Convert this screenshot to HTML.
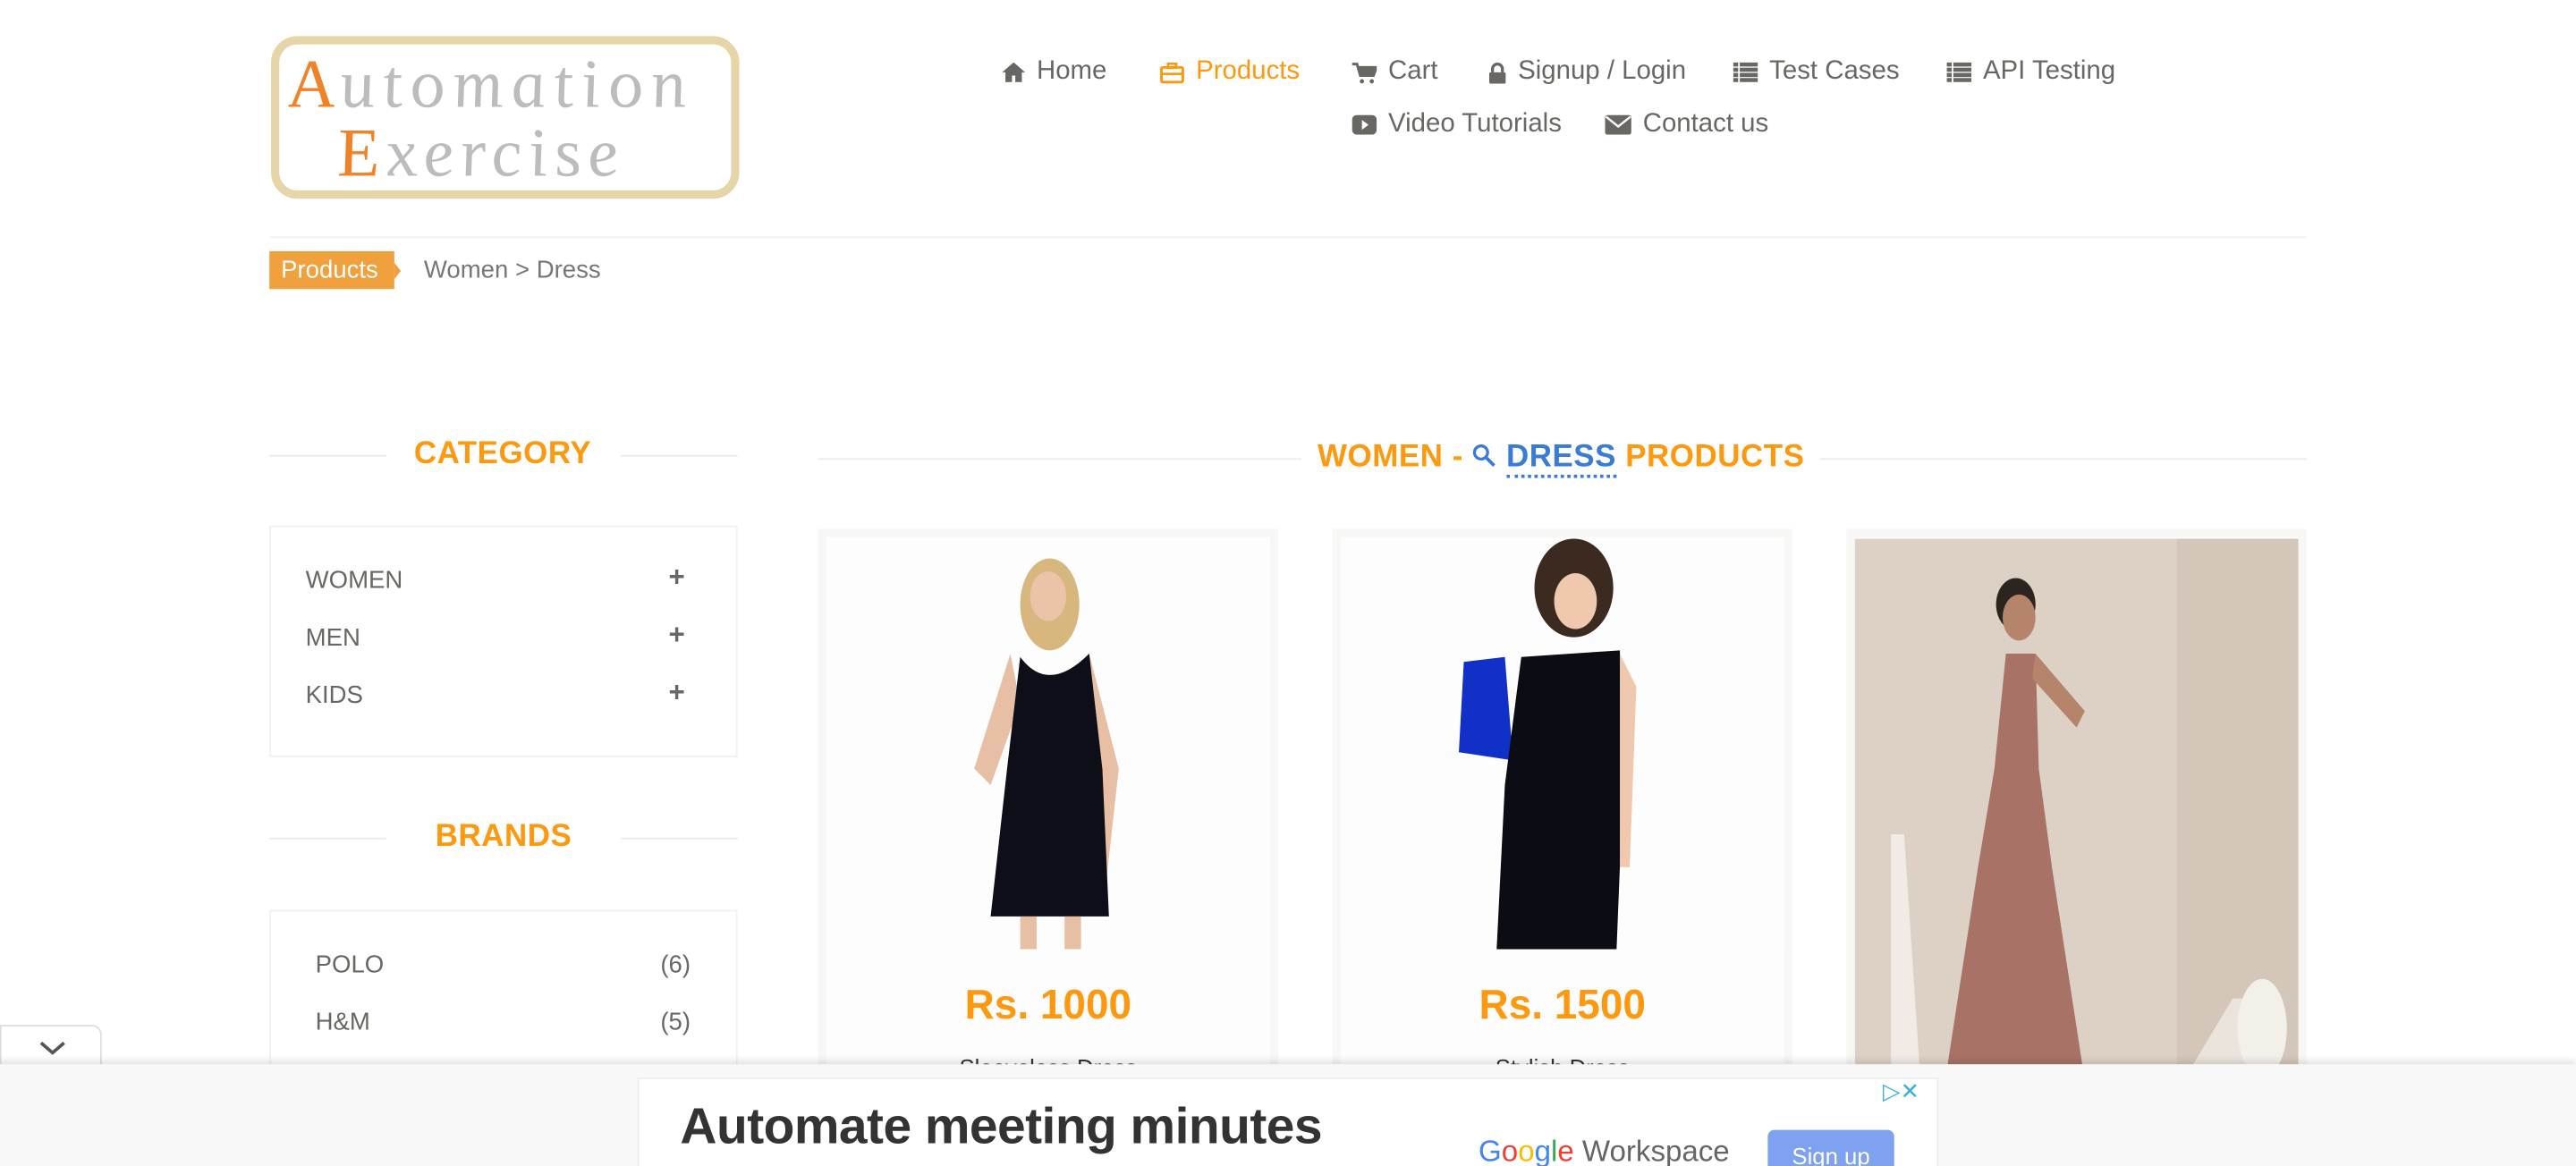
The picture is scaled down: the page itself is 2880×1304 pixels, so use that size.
<!DOCTYPE html>
<html><head><meta charset="utf-8"><style>
*{margin:0;padding:0;box-sizing:border-box}
html,body{width:2880px;height:1304px;overflow:hidden;background:#fff}
#w{position:absolute;left:0;top:0;width:1568px;height:710px;transform:scale(1.836735);transform-origin:0 0;font-family:"Liberation Sans",sans-serif;color:#696763;overflow:hidden}
.a{position:absolute;white-space:nowrap}
.nav{font-size:16px;color:#696763;display:flex;align-items:center;gap:7px}
.nav svg{flex:none}
.or{color:#FE980F}
.h2{font-size:19px;font-weight:bold;color:#FE980F;letter-spacing:.3px}
.line{position:absolute;height:1px;background:#eaeaea}
.box{position:absolute;border:1px solid #f1f1f1}
.card{position:absolute;top:322px;width:280px;height:340px;background:#f7f7f5;}
.card .in{position:absolute;left:5px;top:5px;right:5px;bottom:0;background:#fdfdfd}
.price{font-size:25px;font-weight:bold;color:#FE980F;width:100%;text-align:center;left:0}
.nm{font-size:14px;color:#333;width:100%;text-align:center;left:0}
</style></head><body><div id="w">
<div class="a" style="left:165px;top:22px;width:285px;height:99px;border:5px solid #e6d5a9;border-radius:16px;background:#fff"></div>
<div class="a" style="left:176px;top:28px;font-family:'Liberation Serif',serif;font-style:italic;font-size:42px;color:#bcbcbc;letter-spacing:5px;transform:skewX(8deg)"><span style="color:#f0832a">A</span>utomation</div>
<div class="a" style="left:205px;top:70px;font-family:'Liberation Serif',serif;font-style:italic;font-size:42px;color:#bcbcbc;letter-spacing:4px;transform:skewX(8deg)"><span style="color:#f0832a">E</span>xercise</div>
<div class="a nav" style="left:610px;top:35px"><svg width="14" height="12" viewBox="0 0 14 12"><path d="M7 0L0 6h2v6h4V8h2v4h4V6h2z" fill="#696763"/></svg>Home</div>
<div class="a nav or" style="left:706px;top:35px"><svg width="15" height="13" viewBox="0 0 15 13"><rect x="1" y="3" width="13" height="9" rx="1" fill="none" stroke="#FE980F" stroke-width="1.6"/><rect x="5" y="0.8" width="5" height="2.5" fill="none" stroke="#FE980F" stroke-width="1.4"/><line x1="1" y1="7" x2="14" y2="7" stroke="#FE980F" stroke-width="1.4"/></svg>Products</div>
<div class="a nav" style="left:823px;top:35px"><svg width="15" height="13" viewBox="0 0 15 13"><path d="M0 1h3l2 7h8l2-5H4" fill="none" stroke="#696763" stroke-width="1.6"/><path d="M4 3h11l-2 5H5z" fill="#696763"/><circle cx="6" cy="11.5" r="1.3" fill="#696763"/><circle cx="12" cy="11.5" r="1.3" fill="#696763"/></svg>Cart</div>
<div class="a nav" style="left:906px;top:35px"><svg width="11" height="13" viewBox="0 0 11 13"><path d="M2.5 6V4a3 3 0 016 0v2" fill="none" stroke="#696763" stroke-width="1.8"/><rect x="0.5" y="6" width="10" height="7" rx="1" fill="#696763"/></svg>Signup / Login</div>
<div class="a nav" style="left:1055px;top:35px"><svg width="15" height="12" viewBox="0 0 15 12"><g fill="#696763"><rect y="0" width="3" height="2.5"/><rect y="3.2" width="3" height="2.5"/><rect y="6.4" width="3" height="2.5"/><rect y="9.5" width="3" height="2.5"/><rect x="4" y="0" width="11" height="2.5"/><rect x="4" y="3.2" width="11" height="2.5"/><rect x="4" y="6.4" width="11" height="2.5"/><rect x="4" y="9.5" width="11" height="2.5"/></g></svg>Test Cases</div>
<div class="a nav" style="left:1185px;top:35px"><svg width="15" height="12" viewBox="0 0 15 12"><g fill="#696763"><rect y="0" width="3" height="2.5"/><rect y="3.2" width="3" height="2.5"/><rect y="6.4" width="3" height="2.5"/><rect y="9.5" width="3" height="2.5"/><rect x="4" y="0" width="11" height="2.5"/><rect x="4" y="3.2" width="11" height="2.5"/><rect x="4" y="6.4" width="11" height="2.5"/><rect x="4" y="9.5" width="11" height="2.5"/></g></svg>API Testing</div>
<div class="a nav" style="left:823px;top:67px"><svg width="15" height="12" viewBox="0 0 15 12"><rect width="15" height="12" rx="3" fill="#696763"/><path d="M6 3l4 3-4 3z" fill="#fff"/></svg>Video Tutorials</div>
<div class="a nav" style="left:977px;top:67px"><svg width="16" height="12" viewBox="0 0 16 12"><rect width="16" height="12" rx="1.5" fill="#696763"/><path d="M0.5 1l7.5 6 7.5-6" fill="none" stroke="#fff" stroke-width="1.3"/></svg>Contact us</div>
<div class="line" style="left:164px;top:144px;width:1240px;background:#f2f2f2"></div>
<div class="a" style="left:164px;top:153px;width:76px;height:23px;background:#f0a03c;color:#fff;font-size:15px;padding:3px 0 0 7px">Products</div>
<div class="a" style="left:240px;top:160px;width:0;height:0;border-top:5px solid transparent;border-bottom:5px solid transparent;border-left:4px solid #f0a03c"></div>
<div class="a" style="left:258px;top:156px;font-size:15px;color:#777">Women &gt; Dress</div>
<div class="line" style="left:164px;top:277px;width:71px"></div>
<div class="line" style="left:378px;top:277px;width:71px"></div>
<div class="a h2" style="left:252px;top:266px">CATEGORY</div>
<div class="box" style="left:164px;top:320px;width:285px;height:141px"></div>
<div class="a" style="left:186px;top:345px;font-size:15px">WOMEN</div>
<div class="a" style="left:186px;top:380px;font-size:15px">MEN</div>
<div class="a" style="left:186px;top:415px;font-size:15px">KIDS</div>
<div class="a" style="left:407px;top:342px;font-size:17px;font-weight:bold">+</div>
<div class="a" style="left:407px;top:377px;font-size:17px;font-weight:bold">+</div>
<div class="a" style="left:407px;top:412px;font-size:17px;font-weight:bold">+</div>
<div class="line" style="left:164px;top:510px;width:71px"></div>
<div class="line" style="left:378px;top:510px;width:71px"></div>
<div class="a h2" style="left:265px;top:499px">BRANDS</div>
<div class="box" style="left:164px;top:554px;width:285px;height:160px"></div>
<div class="a" style="left:192px;top:579px;font-size:15px">POLO</div>
<div class="a" style="left:192px;top:614px;font-size:15px">H&amp;M</div>
<div class="a" style="left:402px;top:579px;font-size:15px">(6)</div>
<div class="a" style="left:402px;top:614px;font-size:15px">(5)</div>
<div class="line" style="left:498px;top:279px;width:906px"></div>
<div class="a h2" style="left:792px;top:268px;background:#fff;padding:0 10px">WOMEN - <svg width="15" height="15" viewBox="0 0 15 15" style="vertical-align:-1px"><circle cx="5.5" cy="5.5" r="4" fill="none" stroke="#3a7bd5" stroke-width="1.8"/><path d="M8.5 8.5l5 5" stroke="#3a7bd5" stroke-width="2"/></svg> <span style="color:#3a7bd5;border-bottom:2px dotted #3a7bd5">DRESS</span> PRODUCTS</div>
<div class="card" style="left:498px"><div class="in"></div>
<svg class="a" style="left:5px;top:6px" width="270" height="250"><rect width="270" height="250" fill="#fdfdfd"/>
<ellipse cx="136" cy="40" rx="18" ry="28" fill="#d8b77f"/><ellipse cx="135" cy="35" rx="11" ry="15" fill="#eac3a8"/>
<path d="M112 70 L90 140 L100 150 L118 100Z M160 70 L178 140 L168 230 L160 230 L168 140Z" fill="#e7bfa5"/>
<path d="M118 72 Q135 95 160 70 L168 140 L172 230 L100 230 L110 140Z" fill="#0d0e18"/>
<rect x="118" y="230" width="10" height="20" fill="#e7bfa5"/><rect x="145" y="230" width="10" height="20" fill="#e7bfa5"/></svg>
<div class="a price" style="top:276px">Rs. 1000</div><div class="a nm" style="top:320px">Sleeveless Dress</div></div>
<div class="card" style="left:811px"><div class="in"></div>
<svg class="a" style="left:5px;top:6px" width="270" height="250"><rect width="270" height="250" fill="#fdfdfd"/>
<ellipse cx="142" cy="30" rx="24" ry="30" fill="#3a2a20"/><ellipse cx="143" cy="38" rx="13" ry="17" fill="#f0c8ae"/>
<path d="M75 75 L100 72 L105 135 L72 130Z" fill="#1030c8"/>
<path d="M110 72 Q140 70 170 68 L172 150 L168 250 L95 250 L100 150Z" fill="#0b0c14"/>
<path d="M170 70 L180 90 L176 200 L170 200Z" fill="#f0c8ae"/></svg>
<div class="a price" style="top:276px">Rs. 1500</div><div class="a nm" style="top:320px">Stylish Dress</div></div>
<div class="card" style="left:1124px"><div class="in"></div>
<svg class="a" style="left:5px;top:6px" width="270" height="330"><rect width="270" height="330" fill="#ddd1c6"/><rect x="196" width="74" height="330" fill="#d4c7ba"/>
<path d="M22 180 L30 180 L40 330 L22 330Z" fill="#f0ebe4"/><path d="M230 280 L250 280 L240 330 L200 330Z" fill="#ebe4dc"/>
<ellipse cx="248" cy="298" rx="15" ry="30" fill="#f3efe9"/>
<ellipse cx="98" cy="40" rx="12" ry="16" fill="#2c241f"/><ellipse cx="100" cy="48" rx="10" ry="14" fill="#b5846a"/>
<path d="M92 70 L110 70 L112 140 L120 200 L140 330 L55 330 L75 200 L85 140Z" fill="#a87266"/>
<path d="M110 70 L140 105 L135 115 L108 85Z" fill="#b5846a"/></svg>
</div>
<div class="a" style="left:0;top:624px;width:62px;height:28px;background:#fff;border:1px solid #ddd;border-bottom:none;border-radius:0 6px 0 0"><svg width="62" height="26"><path d="M24 10l7 6 7-6" fill="none" stroke="#555" stroke-width="2"/></svg></div>
<div class="a" style="left:0;top:648px;width:1568px;height:62px;background:#f8f8f8;box-shadow:0 -2px 4px rgba(0,0,0,.12)"></div>
<div class="a" style="left:388px;top:656px;width:792px;height:60px;background:#fff;border:1px solid #eee"></div>
<div class="a" style="left:414px;top:668px;font-size:31px;font-weight:bold;color:#333;letter-spacing:-.3px">Automate meeting minutes</div>
<div class="a" style="left:900px;top:691px;font-size:18px;color:#666"><span style="color:#4285f4">G</span><span style="color:#ea4335">o</span><span style="color:#fbbc05">o</span><span style="color:#4285f4">g</span><span style="color:#34a853">l</span><span style="color:#ea4335">e</span> Workspace</div>
<div class="a" style="left:1076px;top:688px;width:77px;height:30px;background:#7fa2f0;border-radius:4px;color:#fff;font-size:14px;text-align:center;padding-top:8px">Sign up</div>
<div class="a" style="left:1146px;top:656px;font-size:14px;color:#3bb0d8">▷✕</div>
</div></body></html>
